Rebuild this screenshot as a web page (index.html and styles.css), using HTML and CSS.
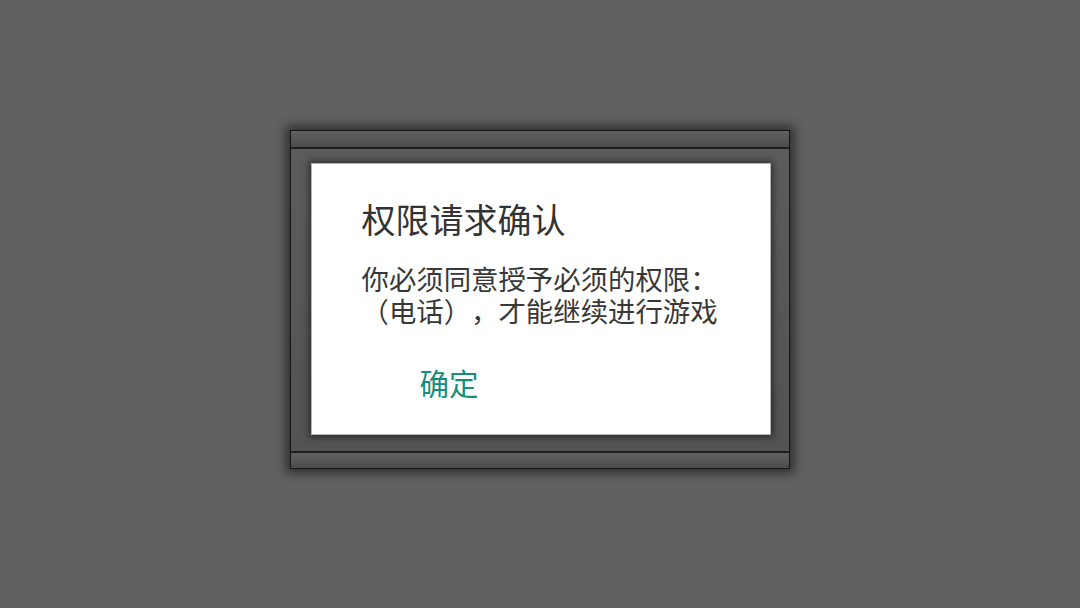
FILE: index.html
```html
<!DOCTYPE html>
<html lang="zh-CN">
<head>
  <meta charset="UTF-8">
  <meta name="viewport" content="width=device-width, initial-scale=1.0">
  <title>权限请求确认</title>
  <link rel="stylesheet" href="styles.css">
</head>
<body>
  <div class="frame">
    <div class="strip strip-top"></div>
    <div class="frame-body">
      <div class="dialog">
        <h2 class="dialog-title">权限请求确认</h2>
        <p class="dialog-message">你必须同意授予必须的权限：<br>（电话），才能继续进行游戏</p>
        <div class="dialog-actions">
          <button class="dialog-button" onclick="confirmPermission()">确定</button>
        </div>
      </div>
    </div>
    <div class="strip strip-bottom"></div>
  </div>

  <script>
    function confirmPermission() {
      document.querySelector('.frame').style.display = 'none';
    }
  </script>
</body>
</html>
```

FILE: styles.css
```css
body {
  font-family: "Noto Sans CJK SC", "Noto Sans", sans-serif;
  margin: 0;
  padding: 0;
  display: flex;
  justify-content: center;
  align-items: flex-start;
  height: 100vh;
  background-color: #616161;
  text-spacing-trim: space-all;
}
.frame {
  margin-top: 130px;
  margin-right: 1px;
  border: 1px solid #161616;
  background-color: #575757;
  box-shadow: 0 0 10px 4px rgba(0, 0, 0, 0.55);
}
.strip {
  height: 16px;
  background: linear-gradient(#606060, #4c4c4c);
}
.strip-top {
  border-bottom: 2px solid #1e1e1e;
}
.strip-bottom {
  height: 15px;
  border-top: 2px solid #1e1e1e;
}
.frame-body {
  padding: 14px 18px 16px 20px;
  background: linear-gradient(#5c5c5c, #535353);
}
.dialog {
  width: 458px;
  height: 270px;
  background-color: #ffffff;
  border: 1px solid #b4b4b4;
  box-shadow: 0 0 7px 2px rgba(0, 0, 0, 0.5);
}
.dialog-title {
  margin: 35px 0 0 50px;
  font-size: 34px;
  font-weight: normal;
  line-height: 40px;
  color: #333333;
}
.dialog-message {
  margin: 23px 0 0 50px;
  font-size: 27.4px;
  line-height: 32px;
  color: #383838;
}
.dialog-actions {
  margin: 38px 0 0 108px;
}
.dialog-button {
  font-family: inherit;
  font-size: 29.5px;
  line-height: 36px;
  padding: 0;
  border: none;
  background: none;
  color: #138f7c;
  cursor: pointer;
}
```
